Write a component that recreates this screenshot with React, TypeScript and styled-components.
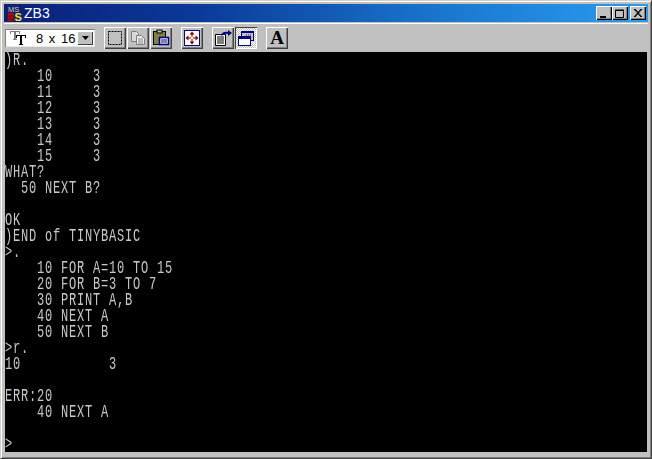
import React from "react";
import styled, { createGlobalStyle, css } from "styled-components";

const Global = createGlobalStyle`
  html, body { margin: 0; padding: 0; background: #c0c0c0; overflow: hidden; }
  #root { width: 652px; height: 459px; }
`;

const Win = styled.div`
  width: 652px; height: 459px; box-sizing: border-box; background: #c0c0c0;
  border-top: 1px solid #d4d0c8; border-left: 1px solid #d4d0c8;
  border-right: 1px solid #404040; border-bottom: 1px solid #404040;
  box-shadow: inset 1px 1px 0 #fff, inset -1px -1px 0 #808080;
  padding: 3px; display: flex; flex-direction: column;
`;
const TitleBar = styled.div`
  height: 18px; flex: none; display: flex; align-items: center; padding: 0 2px 0 3px;
  background: linear-gradient(90deg, #0a1f78 0%, #0a3a98 30%, #1a7ad0 70%, #2a9cf0 100%);
`;
const TitleText = styled.span`
  font: 14px "Liberation Sans", Arial, sans-serif; color: #fff; margin-left: 1px; flex: 1;
`;
const CtrlBtn = styled.div<{ $gap?: number }>`
  width: 16px; height: 14px; box-sizing: border-box; background: #c0c0c0; margin-left: ${p => p.$gap ?? 0}px;
  box-shadow: inset 1px 1px 0 #fff, inset -1px -1px 0 #000, inset -2px -2px 0 #808080;
  display: flex; align-items: center; justify-content: center;
`;
const Toolbar = styled.div`
  height: 29px; flex: none; display: flex; align-items: center; padding: 0 0 0 1px; box-sizing: border-box;
  border-top: 1px solid #fff; margin-top: 1px;
`;
const Combo = styled.div`
  width: 90px; height: 18px; box-sizing: border-box; background: #fff; display: flex; align-items: center;
  box-shadow: inset 1px 1px 0 #808080, inset -1px -1px 0 #e8e8e8;
  padding-left: 5px; margin-right: 9px;
`;
const ComboText = styled.span`
  font: 13px "Liberation Sans", Arial, sans-serif; color: #000; margin-left: 9px; flex: 1; white-space: pre; word-spacing: 2px;
`;
const ComboArrow = styled.div`
  width: 16px; height: 14px; margin-right: 2px; background: #c0c0c0; display: flex; align-items: center; justify-content: center;
  box-shadow: inset 1px 1px 0 #fff, inset -1px -1px 0 #404040;
`;
const ToolBtn = styled.div<{ $on?: boolean; $gap?: number }>`
  width: 22px; height: 22px; flex: none; box-sizing: border-box; margin-left: ${p => p.$gap ?? 0}px;
  display: flex; align-items: center; justify-content: center; background: #c0c0c0;
  ${p => p.$on
    ? css`
      box-shadow: inset 1px 1px 0 #404040, inset -1px -1px 0 #fff;
      background: repeating-conic-gradient(#fff 0 25%, #c0c0c0 0 50%) 0 0 / 2px 2px;`
    : css`box-shadow: inset 1px 1px 0 #fff, inset -1px -1px 0 #404040, inset -2px -2px 0 #808080;`}
`;
const FontGlyph = styled.span`
  font: 700 19px/22px "Liberation Serif", serif; color: #000;
`;
const Terminal = styled.div`
  flex: none; width: 642px; height: 400px; margin-left: 1px; background: #000; overflow: hidden;
`;
const Row = styled.div`
  height: 16px; width: 642px; white-space: pre; color: #c8c8c8;
  font: 12px/16px "Liberation Mono", monospace; letter-spacing: 0.8px;
  transform: scaleY(1.5); transform-origin: 0 50%; will-change: transform;
`;

const lines = [
  ")R.",
  "    10     3",
  "    11     3",
  "    12     3",
  "    13     3",
  "    14     3",
  "    15     3",
  "WHAT?",
  "  50 NEXT B?",
  "",
  "OK",
  ")END of TINYBASIC",
  ">.",
  "    10 FOR A=10 TO 15",
  "    20 FOR B=3 TO 7",
  "    30 PRINT A,B",
  "    40 NEXT A",
  "    50 NEXT B",
  ">r.",
  "10           3",
  "",
  "ERR:20",
  "    40 NEXT A",
  "",
  ">",
];

const MsDos = () => (
  <svg width="16" height="16" viewBox="0 0 16 16">
    <rect width="16" height="16" fill="#14206a" />
    <text x="1" y="7" fontFamily="Liberation Sans" fontSize="7.500" fill="#c8c8c8">MS</text>
    <rect x="1" y="8" width="6" height="8" fill="#c00000" />
    <text x="1.500" y="15" fontFamily="Liberation Sans" fontSize="8" fontWeight="700" fill="#600000">D</text>
    <text x="7.500" y="15.500" fontFamily="Liberation Sans" fontSize="11" fontWeight="700" fill="#f0e030">S</text>
  </svg>
);

export default function App() {
  return (
    <Win>
      <Global />
      <TitleBar>
        <MsDos />
        <TitleText>ZB3</TitleText>
        <CtrlBtn>
          <svg width="10" height="9" viewBox="0 0 10 9"><rect x="1" y="7" width="6" height="2" fill="#000" /></svg>
        </CtrlBtn>
        <CtrlBtn>
          <svg width="10" height="9" viewBox="0 0 10 9"><path d="M.5 1.500h8v7h-8z M0 1h9" fill="none" stroke="#000" /></svg>
        </CtrlBtn>
        <CtrlBtn $gap={2}>
          <svg width="10" height="9" viewBox="0 0 10 9"><path d="M1 0l7 8M8 0L1 8M2 0l7 8M9 0L2 8" stroke="#000" fill="none" /></svg>
        </CtrlBtn>
      </TitleBar>
      <Toolbar>
        <Combo>
          <svg width="17" height="14" viewBox="0 0 17 14">
            <path d="M0 0h10v3h-1V1H6v7h1v1H3V8h1V1H1v2H0z" fill="#808080" />
            <path d="M6 4h10v3h-1V5h-3v8h1v1H9v-1h1V5H7v2H6z" fill="#000" />
          </svg>
          <ComboText>8 x 16</ComboText>
          <ComboArrow>
            <svg width="7" height="4" viewBox="0 0 7 4"><path d="M0 0h7L3.500 4z" fill="#000" /></svg>
          </ComboArrow>
        </Combo>
        <ToolBtn>
          <svg width="14" height="14" viewBox="0 0 14 14"><rect x=".5" y=".5" width="13" height="13" fill="none" stroke="#000" strokeDasharray="2 1" /></svg>
        </ToolBtn>
        <ToolBtn $gap={1}>
          <svg width="16" height="16" viewBox="0 0 16 16">
            <path d="M1.500 1.500h5l2 2v8h-7z" fill="#d8d8d8" stroke="#808080" />
            <path d="M6.500 5.500h5l3 3v6h-8z" fill="#e8e8e8" stroke="#808080" />
            <path d="M8 9h5M8 11h5M8 13h5" stroke="#909090" />
          </svg>
        </ToolBtn>
        <ToolBtn $gap={1}>
          <svg width="18" height="18" viewBox="0 0 18 18">
            <rect x="1.500" y="2.500" width="12" height="13" fill="#808040" stroke="#000" />
            <rect x="5" y="1" width="5" height="3" fill="#c0c0a0" stroke="#000" />
            <rect x="7.500" y="8.500" width="9" height="7" fill="#fff" stroke="#000080" strokeWidth="1.6" />
            <path d="M9 11h6M9 13h6" stroke="#000080" />
          </svg>
        </ToolBtn>
        <ToolBtn $gap={9}>
          <svg width="16" height="16" viewBox="0 0 16 16">
            <rect x=".5" y=".5" width="15" height="15" fill="#fff" stroke="#000080" />
            <path d="M8 1.500l2.500 3h-5zM8 14.500l2.500-3h-5zM1.500 8l3-2.500v5zM14.500 8l-3-2.500v5z" fill="#800000" />
            <path d="M7.500 4h1v3h-1zM7.500 9h1v3h-1zM4 7.500h3v1H4zM9 7.500h3v1H9z" fill="#800000" />
          </svg>
        </ToolBtn>
        <ToolBtn $gap={9}>
          <svg width="18" height="16" viewBox="0 0 18 16">
            <path d="M1.500 4.500h10v11h-10z" fill="#fff" stroke="#000" />
            <path d="M3 7h7M3 9h7M3 11h7M3 13h7" stroke="#000" />
            <path d="M7 5c1-3 4-4 7-3V0l4 3-4 3V4C11 3.500 9 4 8 6z" fill="#000080" />
          </svg>
        </ToolBtn>
        <ToolBtn $on $gap={1}>
          <svg width="16" height="16" viewBox="0 0 16 16">
            <rect x="3.500" y="1.500" width="12" height="9" fill="#c0c0c0" stroke="#000080" />
            <rect x="3" y="1" width="13" height="2" fill="#000080" />
            <path d="M8 5h5M7 7h6" stroke="#800080" strokeDasharray="1 1" />
            <rect x=".5" y="6.500" width="12" height="9" fill="#fff" stroke="#000080" />
            <rect x="0" y="6" width="13" height="3" fill="#000080" />
          </svg>
        </ToolBtn>
        <ToolBtn $gap={9}>
          <FontGlyph>A</FontGlyph>
        </ToolBtn>
      </Toolbar>
      <Terminal>
        {lines.map((l, i) => <Row key={i}>{l}</Row>)}
      </Terminal>
    </Win>
  );
}
